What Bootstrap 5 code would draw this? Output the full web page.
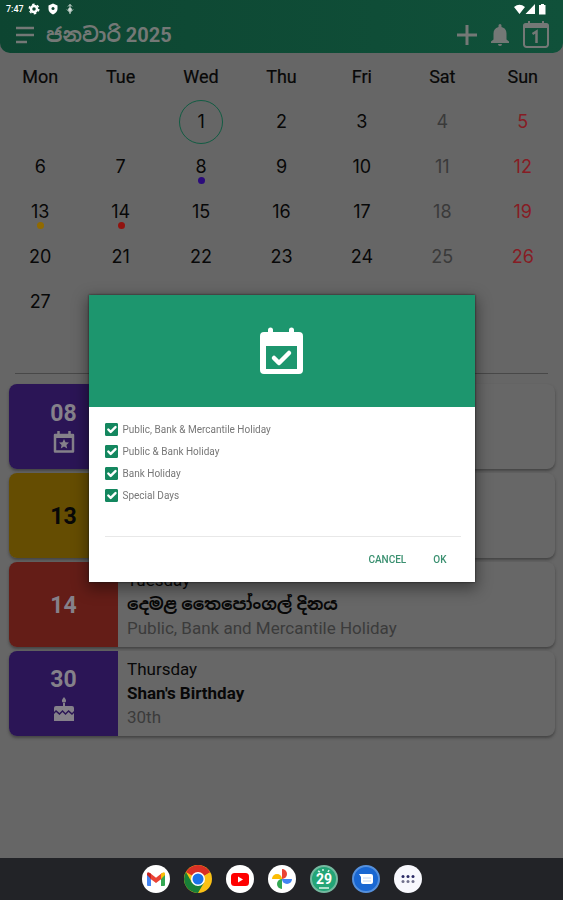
<!DOCTYPE html>
<html lang="si">
<head>
<meta charset="utf-8">
<meta name="viewport" content="width=device-width, initial-scale=1">
<title>ජනවාරි 2025</title>
<link href="https://cdn.jsdelivr.net/npm/bootstrap@5.3.0/dist/css/bootstrap.min.css" rel="stylesheet">
<style>
  body { background: #666; color: #080808; font-family: Roboto, "Noto Sans Sinhala", "Noto Sans", sans-serif; font-size: 17px; line-height: 24px; }
  svg { display: block; flex: none; }
  .app-head { background: linear-gradient(90deg, #0d4531, #10513a); border-radius: 0 0 10px 10px; color: #747876; }
  .status-row { height: 18px; padding: 0 17px 0 6px; color: #fff; font-size: 9px; line-height: 18px; }
  .title-row { height: 35px; padding: 0 14px 2px; }
  .title-row h1 { font-size: 20px; line-height: 28px; font-weight: 700; margin: 0 0 0 11px; }
  .head-actions { gap: 14px; }
  .icon-btn { border: 0; padding: 0; background: none; color: inherit; }
  .month { table-layout: fixed; width: 100%; text-align: center; margin-top: 1px; }
  .month th { font-weight: 400; font-size: 18px; -webkit-text-stroke: .2px; }
  .month th, .month td { height: 45px; padding: 0; vertical-align: middle; }
  .month td { font-family: Inter, sans-serif; font-size: 18px; }
  .month td:nth-child(6) { color: #3a3a3a; }
  .month td:nth-child(7) { color: #861c24; }
  .day-today { display: inline-block; width: 44px; height: 44px; line-height: 42px; border: 1px solid #125c43; border-radius: 50%; }
  .day-mark { position: relative; }
  .day-mark::after { content: ""; position: absolute; left: 50%; bottom: -7px; width: 7px; height: 7px; margin-left: -3px; border-radius: 50%; background: var(--tone); }
  .tone-violet { --tone: #2b1556; }
  .tone-amber { --tone: #654d02; color: #080808; }
  .tone-red { --tone: #641d17; }
  .dot-violet { --tone: #2b0b7c; } .dot-amber { --tone: #916a00; } .dot-red { --tone: #91130f; }
  .rule { border-top: 1px solid #484848; margin: 4px 15px 10px; }
  .events { padding: 0 8px 0 9px; gap: 4px; }
  .event { min-height: 85px; border-radius: 8px; background: #676767; box-shadow: 0 2px 3px #444; overflow: hidden; }
  .event-date { width: 109px; padding-top: 2px; background: var(--tone); font-size: 23px; line-height: 26px; font-weight: 700; }
  .event-date:not(.tone-amber) { color: #85818a; }
  .event-text { padding: 6px 9px; }
  .soft-text { color: #3b3b3b; }
  .taskbar { background: #222327; height: 42px; gap: 14px; }
  .scrim { padding-bottom: 24px; }
  .sheet { width: 386px; background: #fff; box-shadow: 0 5px 14px 2px rgba(0,0,0,.4), 0 0 2px #222; font-size: 10px; color: #777; }
  .sheet-head { height: 112px; background: #1d966e; }
  .choices { padding: 12px 16px 29px; }
  .choices label { line-height: 22px; }
  .choice-row { height: 22px; gap: 5px; }
  .choice-row .form-check-input { width: 13px; height: 13px; margin: 0; border-radius: 1px; background-color: #14875f; border-color: #14875f; background-size: 16px 16px; }
  .sheet-foot { margin: 0 14px 0 16px; border-top: 1px solid #e8e8e8; padding: 12px 14px 11px; gap: 27px; }
  .sheet-foot button { border: 0; padding: 0; background: none; font-weight: 500; font-size: 10px; line-height: 22px; color: #3a9070; }
</style>
<script src="https://cdn.jsdelivr.net/npm/bootstrap@5.3.0/dist/js/bootstrap.bundle.min.js"></script>
</head>
<body class="d-flex flex-column min-vh-100">
<header class="app-head">
  <div class="status-row d-flex align-items-center">
    <span class="fw-medium">7:47</span>
    <svg class="ms-1" width="12" height="12" viewBox="0 0 24 24" fill="none" stroke="#fff"><circle cx="12" cy="12" r="6" stroke-width="5"/><circle cx="12" cy="12" r="9.500" stroke-width="3" stroke-dasharray="5 4.950"/></svg>
    <svg class="ms-2" width="10" height="12" viewBox="0 0 20 24"><path fill="#fff" d="M10 1l9 4v7c0 5-4 9-9 11-5-2-9-6-9-11V5z"/><circle cx="10" cy="11" r="3" fill="#0d4531"/></svg>
    <svg class="ms-2" width="8" height="11" viewBox="0 0 16 22" fill="none" stroke="#d4ded9" stroke-width="2"><path d="M8 1v19M4 5l4-4 4 4M2 11l6 6 6-6"/><circle cx="8" cy="11" r="3" fill="#d4ded9"/></svg>
    <svg class="ms-auto" width="32" height="11" viewBox="0 0 32 11" fill="#fff"><path d="M0 3q5.500-4.500 11 0L5.500 10zM21 0v10H11.500zM26 1h1V0h3v1h1.500v9.500H25V1z"/></svg>
  </div>
  <div class="title-row d-flex align-items-center">
    <button class="icon-btn" aria-label="Menu"><svg width="21" height="18" viewBox="0 0 21 18" stroke="currentColor" stroke-width="2.500"><path d="M2 2h18M2 9h18M2 16h11"/></svg></button>
    <h1>ජනවාරි 2025</h1>
    <div class="head-actions d-flex align-items-center ms-auto">
      <button class="icon-btn" aria-label="Add"><svg width="20" height="20" viewBox="0 0 20 20" stroke="currentColor" stroke-width="3"><path d="M10 0v20M0 10h20"/></svg></button>
      <button class="icon-btn" aria-label="Alerts"><svg width="18" height="22" viewBox="0 0 18 22" fill="currentColor"><path d="M7.500 3V1.500a1.500 1.500 0 0 1 3 0V3c3.500.8 5 3.500 5 6.500v6l2.500 2V19H0v-1.500l2.500-2v-6c0-3 1.500-5.700 5-6.500zM7 20h4a2 2 0 0 1-4 0z"/></svg></button>
      <button class="icon-btn" aria-label="Today"><svg width="26" height="27" viewBox="0 0 26 27" fill="none" stroke="currentColor"><path stroke-width="2" d="M2.500 3h21a1.500 1.500 0 0 1 1.500 1.500v19a2.500 2.500 0 0 1-2.500 2.500h-19A2.500 2.500 0 0 1 1 23.500v-19A1.500 1.500 0 0 1 2.500 3z"/><path stroke-width="4" d="M1 5h24"/><path stroke-width="2" d="M6 0v4M20 0v4"/><path stroke-width="2.500" d="M9.500 13l4-2.500V22"/></svg></button>
    </div>
  </div>
</header>

<main class="flex-grow-1">
  <table class="month">
    <thead><tr><th>Mon</th><th>Tue</th><th>Wed</th><th>Thu</th><th>Fri</th><th>Sat</th><th>Sun</th></tr></thead>
    <tbody>
      <tr><td></td><td></td><td><span class="day-today">1</span></td><td>2</td><td>3</td><td>4</td><td>5</td></tr>
      <tr><td>6</td><td>7</td><td><span class="day-mark dot-violet">8</span></td><td>9</td><td>10</td><td>11</td><td>12</td></tr>
      <tr><td><span class="day-mark dot-amber">13</span></td><td><span class="day-mark dot-red">14</span></td><td>15</td><td>16</td><td>17</td><td>18</td><td>19</td></tr>
      <tr><td>20</td><td>21</td><td>22</td><td>23</td><td>24</td><td>25</td><td>26</td></tr>
      <tr><td>27</td><td></td><td></td><td></td><td></td><td></td><td></td></tr>
      <tr><td></td><td></td><td></td><td></td><td></td><td></td><td></td></tr>
    </tbody>
  </table>
  <div class="rule"></div>
  <section class="events d-flex flex-column">
    <article class="event d-flex">
      <div class="event-date tone-violet d-flex flex-column align-items-center justify-content-center">08
        <svg class="mt-1" width="22" height="23" viewBox="0 0 22 23"><path fill="none" stroke="currentColor" stroke-width="2.500" stroke-linejoin="round" d="M2 4h18v16.500H2zM5.500 0v5M16.500 0v5"/><path stroke="currentColor" stroke-width="4" d="M1 5h20"/><path fill="currentColor" d="M11 8l1.500 3.300 3.500.3-2.600 2.300.8 3.500-3.200-1.900-3.200 1.900.8-3.500L6 11.600l3.500-.3z"/></svg>
      </div>
    </article>
    <article class="event d-flex">
      <div class="event-date tone-amber d-flex align-items-center justify-content-center">13</div>
    </article>
    <article class="event d-flex">
      <div class="event-date tone-red d-flex align-items-center justify-content-center">14</div>
      <div class="event-text"><div>Tuesday</div><div class="fw-bold">දෙමළ තෛපෝංගල් දිනය</div><div class="soft-text">Public, Bank and Mercantile Holiday</div></div>
    </article>
    <article class="event d-flex">
      <div class="event-date tone-violet d-flex flex-column align-items-center justify-content-center">30
        <svg class="mt-1" width="22" height="25" viewBox="0 0 22 25" fill="currentColor"><path d="M11 0c3 3.500 2.500 5.500 0 5.500S8 3.500 11 0zM10 6h2v3h7q2 0 2 2v3l-2 2-3.500-3-3 3-3-3-3 3L3 13l-2 2v-4q0-2 2-2h7z"/><path d="M1 17l2-2 3.500 3 3-3 3 3 3-3 3.500 3 2-2v8H1z"/></svg>
      </div>
      <div class="event-text"><div>Thursday</div><div class="fw-bold">Shan's Birthday</div><div class="soft-text">30th</div></div>
    </article>
  </section>
</main>

<nav class="taskbar d-flex align-items-center justify-content-center" aria-label="Apps">
  <a href="#" aria-label="Mail"><svg width="28" height="28" viewBox="0 0 28 28"><circle cx="14" cy="14" r="14" fill="#fff"/><path fill="#4285f4" d="M5 9l4 3v9H6q-1 0-1-1z"/><path fill="#34a853" d="M23 9l-4 3v9h3q1 0 1-1z"/><path fill="#ea4335" d="M8 8l6 4.700L20 8v5.500l-6 4.500-6-4.500z"/><path fill="#c5221f" d="M5 10V9q0-3 3-1l1 1v5z"/><path fill="#fbbc04" d="M23 10V9q0-3-3-1l-1 1v5z"/></svg></a>
  <a href="#" aria-label="Browser"><svg width="28" height="28" viewBox="0 0 28 28"><circle cx="14" cy="14" r="14" fill="#fbc116"/><path fill="#d93025" d="M14 14L1.900 7a14 14 0 0 1 24.200 0z"/><path fill="#d93025" d="M14 7h12.100L14 14z"/><path fill="#188038" d="M1.900 7A14 14 0 0 0 14 28l6.100-10.500L14 14l-6.100 3.500z"/><circle cx="14" cy="14" r="7" fill="#fff"/><circle cx="14" cy="14" r="5.500" fill="#1a73e8"/></svg></a>
  <a href="#" aria-label="Videos"><svg width="28" height="28" viewBox="0 0 28 28"><circle cx="14" cy="14" r="14" fill="#fff"/><rect x="5" y="8" width="18" height="13" rx="3.500" fill="#f00"/><path fill="#fff" d="M12 11.500l5 3-5 3z"/></svg></a>
  <a href="#" aria-label="Photos"><svg width="28" height="28" viewBox="0 0 28 28"><circle cx="14" cy="14" r="14" fill="#fff"/><path fill="#ea4335" d="M14 4a5 5 0 0 1 0 10z"/><path fill="#4285f4" d="M24 14a5 5 0 0 1-10 0z"/><path fill="#34a853" d="M14 24a5 5 0 0 1 0-10z"/><path fill="#fbbc04" d="M4 14a5 5 0 0 1 10 0z"/></svg></a>
  <a href="#" aria-label="Calendar"><svg width="28" height="28" viewBox="0 0 28 28"><circle cx="14" cy="14" r="13" fill="#23a577" stroke="#75b9a0" stroke-width="2"/><path stroke="#d7f3e8" stroke-width="1.500" d="M8 6l2 1M13 4v2M19 5l-1 2M9 23h10"/><text x="14" y="19" text-anchor="middle" font-family="Roboto, sans-serif" font-weight="700" font-size="14" fill="#fff">29</text></svg></a>
  <a href="#" aria-label="Messages"><svg width="28" height="28" viewBox="0 0 28 28"><circle cx="14" cy="14" r="13" fill="#1967d2" stroke="#5590dc" stroke-width="2"/><path fill="#fff" d="M7 9h12q2 0 2 2v6q0 2-2 2h-8q-2 0-2-2v-5z"/><path stroke="#c0d5f4" d="M11 13h8M11 16h8"/></svg></a>
  <a href="#" aria-label="All apps"><svg width="28" height="28" viewBox="0 0 28 28"><circle cx="14" cy="14" r="14" fill="#f8f8fd"/><g fill="#2c2b66"><circle cx="9" cy="11.500" r="1.500"/><circle cx="14" cy="11.500" r="1.500"/><circle cx="19" cy="11.500" r="1.500"/></g><g fill="#71718c"><circle cx="9" cy="16.500" r="1.500"/><circle cx="14" cy="16.500" r="1.500"/><circle cx="19" cy="16.500" r="1.500"/></g></svg></a>
</nav>

<div class="scrim position-fixed top-0 bottom-0 start-0 end-0 d-flex align-items-center justify-content-center">
  <form class="sheet" role="dialog" aria-label="Holiday types">
    <div class="sheet-head d-flex align-items-center justify-content-center">
      <svg width="43" height="48" viewBox="0 0 43 48"><path fill="#fff" fill-rule="evenodd" d="M4 5h4V3a2.500 2.500 0 0 1 5 0v2h16V3a2.500 2.500 0 0 1 5 0v2h5q4 0 4 4v34q0 4-4 4H4q-4 0-4-4V9q0-4 4-4zm2 14v23h31V19z"/><path fill="none" stroke="#fff" stroke-width="4.500" stroke-linecap="round" stroke-linejoin="round" d="M14 31l5 5 10-10"/></svg>
    </div>
    <div class="choices">
      <div class="choice-row d-flex align-items-center"><input class="form-check-input" type="checkbox" id="c1" checked><label for="c1">Public, Bank &amp; Mercantile Holiday</label></div>
      <div class="choice-row d-flex align-items-center"><input class="form-check-input" type="checkbox" id="c2" checked><label for="c2">Public &amp; Bank Holiday</label></div>
      <div class="choice-row d-flex align-items-center"><input class="form-check-input" type="checkbox" id="c3" checked><label for="c3">Bank Holiday</label></div>
      <div class="choice-row d-flex align-items-center"><input class="form-check-input" type="checkbox" id="c4" checked><label for="c4">Special Days</label></div>
    </div>
    <div class="sheet-foot d-flex justify-content-end"><button type="button">CANCEL</button><button type="button">OK</button></div>
  </form>
</div>
</body>
</html>
